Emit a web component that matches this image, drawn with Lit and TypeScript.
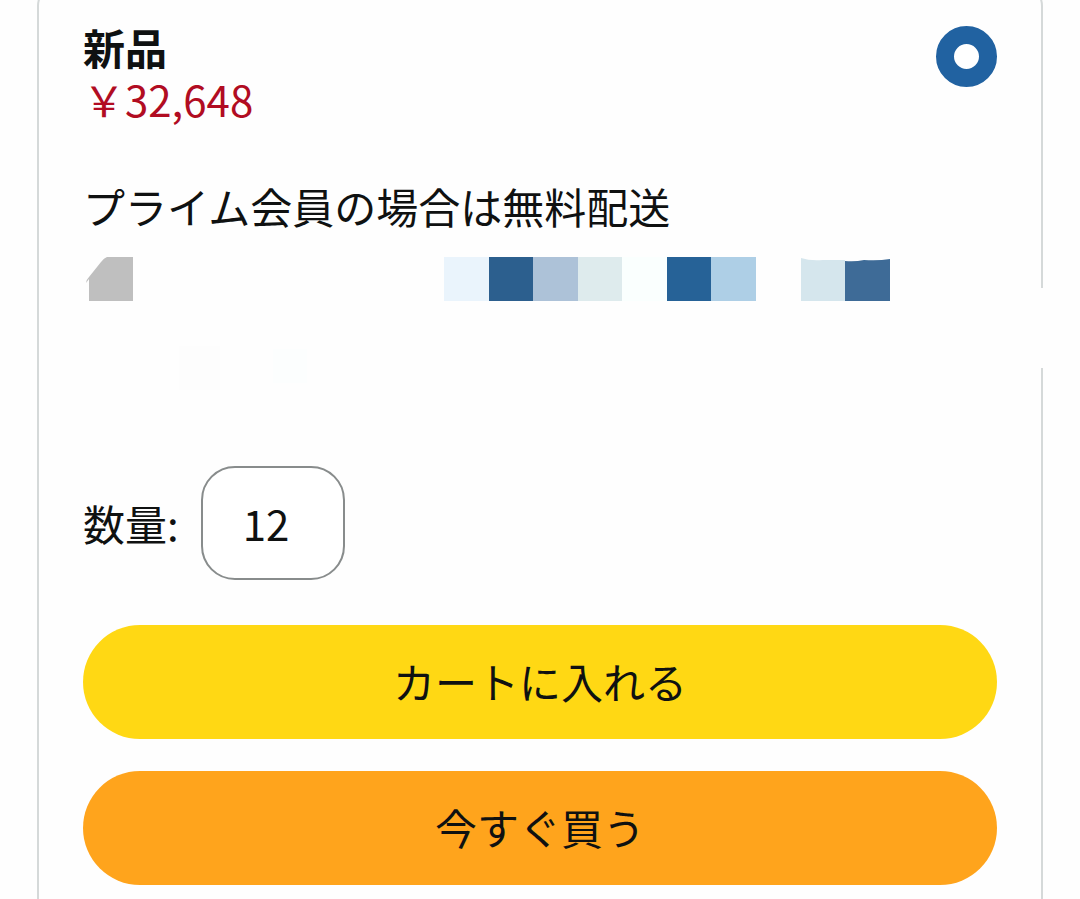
import { LitElement, html, css, svg } from "lit";
import { customElement, state } from "lit/decorators.js";

interface Tile {
  x: number;
  fill: string;
}

const TILES: Tile[] = [
  { x: 361, fill: "#eaf4fc" },
  { x: 406, fill: "#2c5f8e" },
  { x: 450, fill: "#adc2d8" },
  { x: 495, fill: "#deebed" },
  { x: 539, fill: "#fafffe" },
  { x: 584, fill: "#266297" },
  { x: 628, fill: "#aecfe6" },
];

@customElement("app-root")
export class AppRoot extends LitElement {
  static styles = css`
    :host {
      display: block;
      height: 100vh;
      overflow: hidden;
      background: #fefefe;
      color: #0f1111;
      font-family: "Noto Sans CJK JP", sans-serif;
      font-size: 42px;
      line-height: 52px;
    }
    * {
      box-sizing: border-box;
    }
    .card {
      position: relative;
      min-height: calc(100vh + 40px);
      margin: -16px 37px 0;
      padding: 35px 44px 0;
      border: 2px solid #d5d9d9;
      border-radius: 22px;
    }
    .border-gap {
      position: absolute;
      top: 302px;
      right: -4px;
      width: 8px;
      height: 80px;
      background: #fefefe;
    }
    .head {
      display: flex;
      justify-content: space-between;
      align-items: flex-start;
    }
    .title {
      display: block;
      font-weight: 700;
    }
    .price {
      margin: 0;
      color: #b10c22;
    }
    .radio {
      appearance: none;
      flex: none;
      width: 61px;
      height: 61px;
      margin: 5px 0 0;
      border: 18px solid #2162a1;
      border-radius: 50%;
      background: #fff;
    }
    .delivery {
      margin: 55px 0 0;
    }
    .mosaic {
      display: block;
      max-width: 100%;
      margin-top: 25px;
    }
    .quantity {
      display: flex;
      align-items: center;
      gap: 22px;
      margin-top: 76px;
    }
    .amount {
      width: 144px;
      height: 114px;
      padding: 0 38px 2px 40px;
      border: 2px solid #888c8c;
      border-radius: 34px;
      background: #fff;
      color: inherit;
      font: inherit;
    }
    .actions {
      display: grid;
      gap: 32px;
      margin-top: 45px;
    }
    .button {
      height: 114px;
      padding: 0 32px 2px;
      border: 0;
      border-radius: 57px;
      background: #ffd814;
      color: inherit;
      font: inherit;
      cursor: pointer;
    }
    .buy {
      background: #ffa41c;
    }
  `;

  @state() private amount = "12";

  private onAmount(event: Event) {
    this.amount = (event.target as HTMLInputElement).value;
  }

  render() {
    return html`
      <main class="card">
        <div class="border-gap"></div>
        <div class="head">
          <div>
            <label class="title" for="new">新品</label>
            <p class="price">￥32,648</p>
          </div>
          <input class="radio" id="new" type="radio" name="condition" checked />
        </div>
        <p class="delivery">プライム会員の場合は無料配送</p>
        <svg class="mosaic" width="808" height="133" viewBox="0 0 808 133" aria-hidden="true">
          <path d="M6 44V22L3 26Q3 23 6 20L18 5Q21 1 24 0H50V44Z" fill="#bfbfbf" />
          ${TILES.map((t) => svg`<rect x=${t.x} y="0" width="45" height="44" fill=${t.fill} />`)}
          <path d="M718 1Q727 4 740 3L762 3V44H718Z" fill="#d5e6ed" />
          <path d="M762 4Q772 5 781 3Q795 4 807 2V44H762Z" fill="#3e6b97" />
          <rect x="96" y="89" width="41" height="44" fill="#fdfdfd" />
          <rect x="190" y="92" width="34" height="34" fill="#fcfefe" />
        </svg>
        <div class="quantity">
          <label for="amount">数量:</label>
          <input
            class="amount"
            id="amount"
            type="text"
            inputmode="numeric"
            .value=${this.amount}
            @input=${this.onAmount}
          />
        </div>
        <div class="actions">
          <button class="button" type="button">カートに入れる</button>
          <button class="button buy" type="button">今すぐ買う</button>
        </div>
      </main>
    `;
  }
}
